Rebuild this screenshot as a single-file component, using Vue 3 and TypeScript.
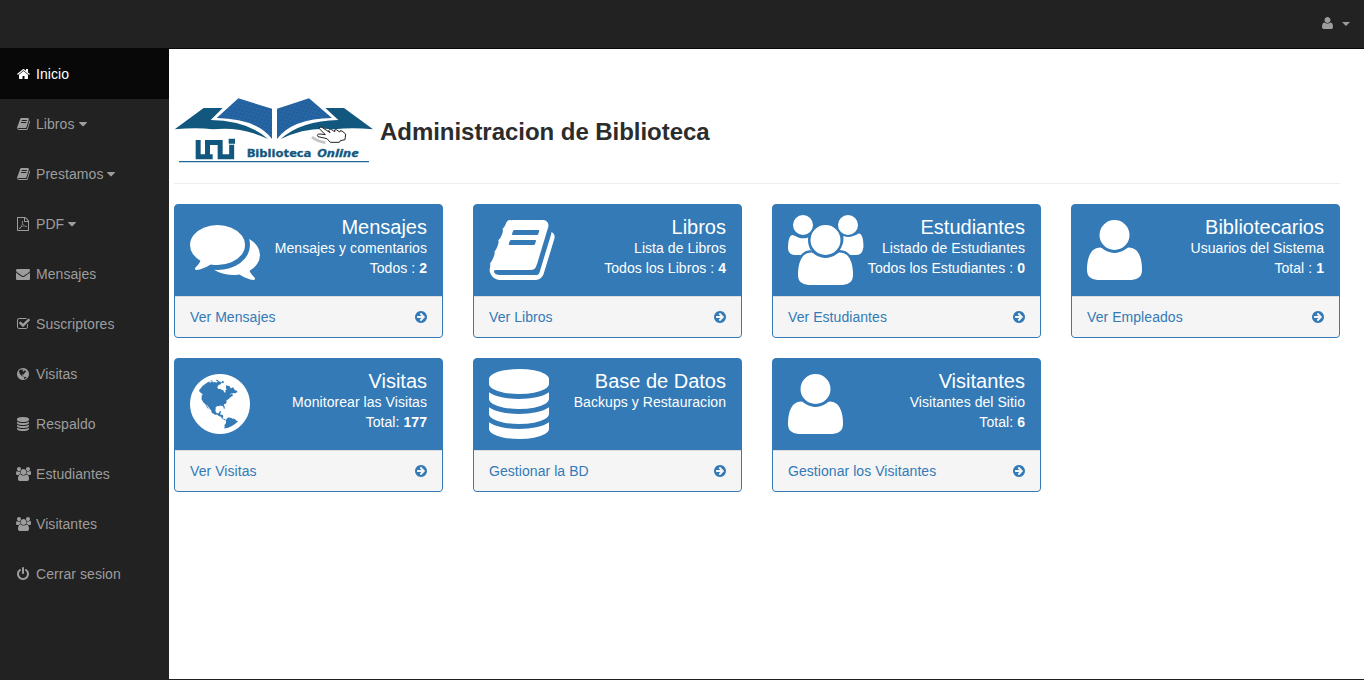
<script setup lang="ts">
interface Glyph { box: string; w: number; d: string }
interface NavItem { label: string; icon: string; active?: boolean; caret?: boolean }
interface Panel { title: string; text: string; total?: string; count?: string; link: string; icon: string }

const make = (x: number, w: number, d: string): Glyph => ({ box: `${x} 0 ${w} 1792`, w: w / 1792, d })

const glyphs: Record<string, Glyph> = {
  user: make(192, 1408, 'M1600 1405q0 120-73 189.5t-194 69.5h-874q-121 0-194-69.5t-73-189.5q0-53 3.5-103.5t14-109 26.5-108.5 43-97.5 62-81 85.5-53.5 111.5-20q9 0 42 21.5t74.5 48 108 48 133.5 21.5 133.5-21.5 108-48 74.5-48 42-21.5q61 0 111.5 20t85.5 53.5 62 81 43 97.5 26.5 108.5 14 109 3.5 103.5zm-320-893q0 159-112.5 271.5t-271.5 112.5-271.5-112.5-112.5-271.5 112.5-271.5 271.5-112.5 271.5 112.5 112.5 271.5z'),
  home: make(64, 1664, 'M1472 992v480q0 26-19 45t-45 19h-384v-384h-256v384h-384q-26 0-45-19t-19-45v-480q0-1 .5-3t.5-3l575-474 575 474q1 2 1 6zm223-69l-62 74q-8 9-21 11h-3q-13 0-21-7l-692-577-692 577q-12 8-24 7-13-2-21-11l-62-74q-8-10-7-23.5t11-21.5l719-599q32-26 76-26t76 26l244 204v-195q0-14 9-23t23-9h192q14 0 23 9t9 23v408l219 182q10 8 11 21.5t-7 23.5z'),
  book: make(48, 1664, 'M1703 478q40 57 18 129l-275 906q-19 64-76.5 107.5t-122.5 43.5h-923q-77 0-148.5-53.5t-99.5-131.5q-24-67-2-127 0-4 3-27t4-37q1-8-3-21.5t-3-19.5q2-11 8-21t16.5-23.5 16.5-23.5q23-38 45-91.5t30-91.5q3-10 .5-30t-.5-28q3-11 17-28t17-23q21-36 42-92t25-90q1-9-2.5-32t.5-28q4-13 22-30.5t22-22.5q19-26 42.5-84.5t27.5-96.5q1-8-3-25.5t-2-26.5q2-8 9-18t18-23 17-21q8-12 16.5-30.5t15-35 16-36 19.5-32 26.5-23.5 36-11.5 47.5 5.5l-1 3q38-9 51-9h761q74 0 114 56t18 130l-274 906q-36 119-71.5 153.5t-128.5 34.5h-869q-27 0-38 15-11 16-1 43 24 70 144 70h923q29 0 56-15.5t35-41.5l300-987q7-22 5-57 38 15 59 43zm-1064 2q-4 13 2 22.5t20 9.5h608q13 0 25.5-9.5t16.5-22.5l21-64q4-13-2-22.5t-20-9.5h-608q-13 0-25.5 9.5t-16.5 22.5zm-83 256q-4 13 2 22.5t20 9.5h608q13 0 25.5-9.5t16.5-22.5l21-64q4-13-2-22.5t-20-9.5h-608q-13 0-25.5 9.5t-16.5 22.5z'),
  pdf: make(128, 1536, 'M1596 380q28 28 48 76t20 88v1152q0 40-28 68t-68 28h-1344q-40 0-68-28t-28-68v-1600q0-40 28-68t68-28h896q40 0 88 20t76 48zm-444-244v376h376q-10-29-22-41l-313-313q-12-12-41-22zm384 1528v-1024h-416q-40 0-68-28t-28-68v-416h-768v1536h1280zm-514-593q33 26 84 56 59-7 117-7 147 0 177 49 16 22 2 52 0 1-1 2l-2 2v1q-6 38-71 38-48 0-115-20t-130-53q-221 24-392 83-153 262-242 262-15 0-28-7l-24-12q-1-1-6-5-10-10-6-36 9-40 56-91.5t132-96.5q14-9 23 6 2 2 2 4 52-85 107-197 68-136 104-262-24-82-30.5-159.5t6.5-127.5q11-40 42-40h22q23 0 35 15 18 21 9 68-2 6-4 8 1 3 1 8v30q-2 123-14 192 55 164 146 238zm-576 411q52-24 137-158-51 40-87.5 84t-49.5 74zm398-920q-15 42-2 132 1-7 7-44 0-3 7-43 1-4 4-8-1-1-1-2-1-2-1-3-1-22-13-36 0 1-1 2v2zm-124 661q135-54 284-81-2-1-13-9.5t-16-13.5q-76-67-127-176-27 86-83 197-30 56-45 83zm646-16q-24-24-140-24 76 28 124 28 14 0 18-1 0-1-2-3z'),
  envelope: make(0, 1792, 'M1792 710v794q0 66-47 113t-113 47h-1472q-66 0-113-47t-47-113v-794q44 49 101 87 362 246 497 345 57 42 92.5 65.5t94.5 48 110 24.5h2q51 0 110-24.5t94.5-48 92.5-65.5q170-123 498-345 57-39 100-87zm0-294q0 79-49 151t-122 123q-376 261-468 325-10 7-42.5 31t-54 38.5-52 32.5-57.5 27-50 9h-2q-23 0-50-9t-57.5-27-52-32.5-54-38.5-42.5-31q-91-64-262-182.5t-205-142.5q-62-42-117-115.5t-55-136.5q0-78 41.5-130t118.5-52h1472q65 0 112.5 47t47.5 113z'),
  check: make(64, 1664, 'M1472 930v318q0 119-84.5 203.5t-203.5 84.5h-832q-119 0-203.5-84.5t-84.5-203.5v-832q0-119 84.5-203.5t203.5-84.5h832q63 0 117 25 15 7 18 23 3 17-9 29l-49 49q-10 10-23 10-3 0-9-2-23-6-45-6h-832q-66 0-113 47t-47 113v832q0 66 47 113t113 47h832q66 0 113-47t47-113v-254q0-13 9-22l64-64q10-10 23-10 6 0 12 3 20 8 20 29zm231-489l-814 814q-24 24-57 24t-57-24l-430-430q-24-24-24-57t24-57l110-110q24-24 57-24t57 24l263 263 647-647q24-24 57-24t57 24l110 110q24 24 24 57t-24 57z'),
  globe: make(128, 1536, 'M896 128q209 0 385.5 103t279.5 279.5 103 385.5-103 385.5-279.5 279.5-385.5 103-385.5-103-279.5-279.5-103-385.5 103-385.5 279.5-279.5 385.5-103zm274 521q-2 1-9.5 9.5t-13.5 9.5q2 0 4.5-5t5-11 3.5-7q6-7 22-15 14-6 52-12 34-8 51 11-2-2 9.5-13t14.5-12q3-2 15-4.5t15-7.5l2-22q-12 1-17.5-7t-6.5-21q0 2-6 8 0-7-4.5-8t-11.5 1-9 1q-10-3-15-7.5t-8-16.5-4-15q-2-5-9.5-11t-9.5-10q-1-2-2.5-5.5t-3-6.5-4-5.5-5.5-2.5-7 5-7.5 10-4.5 5q-3-2-6-1.5t-4.5 1-4.5 3-5 3.5q-3 2-8.5 3t-8.5 2q15-5-1-11-10-4-16-3 9-4 7.5-12t-8.5-14h5q-1-4-8.5-8.5t-17.5-8.5-13-6q-8-5-34-9.5t-33-.5q-5 6-4.5 10.5t4 14 3.5 12.5q1 6-5.5 13t-6.5 12q0 7 14 15.5t10 21.5q-3 8-16 16t-16 12q-5 8-1.5 18.5t10.5 16.5q2 2 1.5 4t-3.5 4.5-5.5 4-6.5 3.5l-3 2q-11 5-20.5-6t-13.5-26q-7-25-16-30-23-8-29 1-5-13-41-26-25-9-58-4 6-1 0-15-7-15-19-12 3-6 4-17.5t1-13.5q3-13 12-23 1-1 7-8.5t9.5-13.5.5-6q35 4 50-11 5-5 11.5-17t10.5-17q9-6 14-5.5t14.5 5.5 14.5 5q14 1 15.5-11t-7.5-20q12 1 3-17-4-7-8-9-12-4-27 5-8 4 2 8-1-1-9.5 10.5t-16.5 17.5-16-5q-1-1-5.5-13.5t-9.5-13.5q-8 0-16 15 3-8-11-15t-24-8q19-12-8-27-7-4-20.5-5t-19.5 4q-5 7-5.5 11.5t5 8 10.5 5.5 11.5 4 8.5 3q14 10 8 14-2 1-8.5 3.5t-11.5 4.5-6 4q-3 4 0 14t-2 14q-5-5-9-17.5t-7-16.5q7 9-25 6l-10-1q-4 0-16 2t-20.5 1-13.5-8q-4-8 0-20 1-4 4-2-4-3-11-9.5t-10-8.5q-46 15-94 41 6 1 12-1 5-2 13-6.5t10-5.5q34-14 42-7l5-5q14 16 20 25-7-4-30-1-20 6-22 12 7 12 5 18-4-3-11.5-10t-14.5-11-15-5q-16 0-22 1-146 80-235 222 7 7 12 8 4 1 5 9t2.5 11 11.5-3q9 8 3 19 1-1 44 27 19 17 21 21 3 11-10 18-1-2-9-9t-9-4q-3 5 .5 18.5t10.5 12.5q-7 0-9.5 16t-2.5 35.5-1 23.5l2 1q-3 12 5.5 34.5t21.5 19.5q-13 3 20 43 6 8 8 9 3 2 12 7.5t15 10 10 10.5q4 5 10 22.5t14 23.5q-2 6 9.5 20t10.5 23q-1 0-2.5 1t-2.5 1q3 7 15.5 14t15.5 13q1 3 2 10t3 11 8 2q2-20-24-62-15-25-17-29-3-5-5.5-15.5t-4.5-14.5q2 0 6 1.5t8.5 3.5 7.5 4 2 3q-3 7 2 17.5t12 18.5 17 19 12 13q6 6 14 19.5t0 13.5q9 0 20 10t17 20q5 8 8 26t5 24q2 7 8.5 13.5t12.5 9.5l16 8 13 7q5 2 18.5 10.5t21.5 11.5q10 4 16 4t14.5-2.5 13.5-3.5q15-2 29 15t21 21q36 19 55 11-2 1 .5 7.5t8 15.5 9 14.5 5.5 8.5q5 6 18 15t18 15q6-4 7-9-3 8 7 20t18 10q14-3 14-32-31 15-49-18 0-1-2.5-5.5t-4-8.5-2.5-8.5 0-7.5 5-3q9 0 10-3.5t-2-12.5-4-13q-1-8-11-20t-12-15q-5 9-16 8t-16-9q0 1-1.5 5.5t-1.5 6.5q-13 0-15-1 1-3 2.5-17.5t3.5-22.5q1-4 5.5-12t7.5-14.5 4-12.5-4.5-9.5-17.5-2.5q-19 1-26 20-1 3-3 10.5t-5 11.5-9 7q-7 3-24 2t-24-5q-13-8-22.5-29t-9.5-37q0-10 2.5-26.5t3-25-5.5-24.5q3-2 9-9.5t10-10.5q2-1 4.5-1.5t4.5 0 4-1.5 3-6q-1-1-4-3-3-3-4-3 7 3 28.5-1.5t27.5 1.5q15 11 22-2 0-1-2.5-9.5t-.5-13.5q5 27 29 9 3 3 15.5 5t17.5 5q3 2 7 5.5t5.5 4.5 5-.5 8.5-6.5q10 14 12 24 11 40 19 44 7 3 11 2t4.5-9.5 0-14-1.5-12.5l-1-8v-18l-1-8q-15-3-18.5-12t1.5-18.5 15-18.5q1-1 8-3.5t15.5-6.5 12.5-8q21-19 15-35 7 0 11-9-1 0-5-3t-7.5-5-4.5-2q9-5 2-16 5-3 7.5-11t7.5-10q9 12 21 2 7-8 1-16 5-7 20.5-10.5t18.5-9.5q7 2 8-2t1-12 3-12q4-5 15-9t13-5l17-11q3-4 0-4 18 2 31-11 10-11-6-20 3-6-3-9.5t-15-5.5q3-1 11.5-.5t10.5-1.5q15-10-7-16-17-5-43 12zm-163 877q206-36 351-189-3-3-12.5-4.5t-12.5-3.5q-18-7-24-8 1-7-2.5-13t-8-9-12.5-8-11-7q-2-2-7-6t-7-5.5-7.5-4.5-8.5-2-10 1l-3 1q-3 1-5.5 2.5t-5.5 3-4 3 0 2.5q-21-17-36-22-5-1-11-5.5t-10.5-7-10-1.5-11.5 7q-5 5-6 15t-2 13q-7-5 0-17.5t2-18.5q-3-6-10.5-4.5t-12 4.5-11.5 8.5-9 6.5-8.5 5.5-8.5 7.5q-3 4-6 12t-5 11q-2-4-11.5-6.5t-9.5-5.5q2 10 4 35t5 38q7 31-12 48-27 25-29 40-4 22 12 26 0 7-8 20.5t-7 21.5q0 6 2 16z'),
  database: make(128, 1536, 'M896 768q237 0 443-43t325-127v170q0 69-103 128t-280 93.5-385 34.5-385-34.5-280-93.5-103-128v-170q119 84 325 127t443 43zm0 768q237 0 443-43t325-127v170q0 69-103 128t-280 93.5-385 34.5-385-34.5-280-93.5-103-128v-170q119 84 325 127t443 43zm0-384q237 0 443-43t325-127v170q0 69-103 128t-280 93.5-385 34.5-385-34.5-280-93.5-103-128v-170q119 84 325 127t443 43zm0-1152q208 0 385 34.5t280 93.5 103 128v128q0 69-103 128t-280 93.5-385 34.5-385-34.5-280-93.5-103-128v-128q0-69 103-128t280-93.5 385-34.5z'),
  users: make(64, 1920, 'M657 896q-162 5-265 128h-134q-82 0-138-40.5t-56-118.5q0-353 124-353 6 0 43.5 21t97.5 42.5 119 21.5q67 0 133-23-5 37-5 66 0 159 93 293zm1071 637q0 120-73 189.5t-194 69.5h-874q-121 0-194-69.5t-73-189.5q0-53 3.5-103.5t14-109 26.5-108.5 43-97.5 62-81 85.5-53.5 111.5-20q10 0 43 21.5t73 48 107 48 135 21.5 135-21.5 107-48 73-48 43-21.5q61 0 111.5 20t85.5 53.5 62 81 43 97.5 26.5 108.5 14 109 3.5 103.5zm-1024-1277q0 106-75 181t-181 75-181-75-75-181 75-181 181-75 181 75 75 181zm704 384q0 159-112.5 271.5t-271.5 112.5-271.5-112.5-112.5-271.5 112.5-271.5 271.5-112.5 271.5 112.5 112.5 271.5zm576 225q0 78-56 118.5t-138 40.5h-134q-103-123-265-128 93-134 93-293 0-29-5-66 66 23 133 23 59 0 119-21.5t97.5-42.5 43.5-21q124 0 124 353zm-128-609q0 106-75 181t-181 75-181-75-75-181 75-181 181-75 181 75 75 181z'),
  power: make(128, 1536, 'M1664 896q0 156-61 298t-164 245-245 164-298 61-298-61-245-164-164-245-61-298q0-182 80.5-343t226.5-270q43-32 95.5-25t83.5 50q32 42 24.5 94.5t-49.5 84.5q-98 74-151.5 181t-53.5 228q0 104 40.5 198.5t109.5 163.5 163.5 109.5 198.5 40.5 198.5-40.5 163.5-109.5 109.5-163.5 40.5-198.5q0-121-53.5-228t-151.5-181q-42-32-49.5-84.5t24.5-94.5q31-43 84-50t95 25q146 109 226.5 270t80.5 343zm-640-768v640q0 52-38 90t-90 38-90-38-38-90v-640q0-52 38-90t90-38 90 38 38 90z'),
  arrow: make(128, 1536, 'M1413 896q0-27-18-45l-91-91-362-362q-18-18-45-18t-45 18l-91 91q-18 18-18 45t18 45l189 189h-502q-26 0-45 19t-19 45v128q0 26 19 45t45 19h502l-189 189q-18 18-18 45t18 45l91 91q18 18 45 18t45-18l362-362 91-91q18-18 18-45zm251 0q0 209-103 385.5t-279.5 279.5-385.5 103-385.5-103-279.5-279.5-103-385.5 103-385.5 279.5-279.5 385.5-103 385.5 103 279.5 279.5 103 385.5z'),
  caret: make(384, 1024, 'M1408 704q0 26-19 45l-448 448q-19 19-45 19t-45-19l-448-448q-19-19-19-45t19-45 45-19h896q26 0 45 19t19 45z'),
  comments: make(0, 1792, 'M1408 768q0 139-94 257t-256.5 186.5-353.5 68.5q-86 0-176-16-124 88-278 128-36 9-86 16h-3q-11 0-20.5-8t-11.5-21q-1-3-1-6.5t.5-6.5 2-6l2.5-5 3.5-5.5 4-5 4.5-5 4-4.5q5-6 23-25t26-29.5 22.5-29 25-38.5 20.5-44q-124-72-195-177t-71-224q0-139 94-257t256.5-186.5 353.5-68.5 353.5 68.5 256.5 186.5 94 257zm384 256q0 120-71 224.5t-195 176.5q10 24 20.5 44t25 38.5 22.5 29 26 29.5 23 25q1 1 4 4.5t4.5 5 4 5 3.5 5.5l2.5 5 2 6 .5 6.5-1 6.5q-3 14-13 22t-22 7q-50-7-86-16-154-40-278-128-90 16-176 16-271 0-472-132 58 4 88 4 161 0 309-45t264-129q125-92 192-212t67-254q0-77-23-152 129 71 204 178t75 230z'),
}

const nav: NavItem[] = [
  { label: 'Inicio', icon: 'home', active: true },
  { label: 'Libros', icon: 'book', caret: true },
  { label: 'Prestamos', icon: 'book', caret: true },
  { label: 'PDF', icon: 'pdf', caret: true },
  { label: 'Mensajes', icon: 'envelope' },
  { label: 'Suscriptores', icon: 'check' },
  { label: 'Visitas', icon: 'globe' },
  { label: 'Respaldo', icon: 'database' },
  { label: 'Estudiantes', icon: 'users' },
  { label: 'Visitantes', icon: 'users' },
  { label: 'Cerrar sesion', icon: 'power' },
]

const panels: Panel[] = [
  { title: 'Mensajes', text: 'Mensajes y comentarios', total: 'Todos :', count: '2', link: 'Ver Mensajes', icon: 'comments' },
  { title: 'Libros', text: 'Lista de Libros', total: 'Todos los Libros :', count: '4', link: 'Ver Libros', icon: 'book' },
  { title: 'Estudiantes', text: 'Listado de Estudiantes', total: 'Todos los Estudiantes :', count: '0', link: 'Ver Estudiantes', icon: 'users' },
  { title: 'Bibliotecarios', text: 'Usuarios del Sistema', total: 'Total :', count: '1', link: 'Ver Empleados', icon: 'user' },
  { title: 'Visitas', text: 'Monitorear las Visitas', total: 'Total:', count: '177', link: 'Ver Visitas', icon: 'globe' },
  { title: 'Base de Datos', text: 'Backups y Restauracion', link: 'Gestionar la BD', icon: 'database' },
  { title: 'Visitantes', text: 'Visitantes del Sitio', total: 'Total:', count: '6', link: 'Gestionar los Visitantes', icon: 'user' },
]
</script>

<template>
  <div class="page">
    <header class="topbar">
      <a class="account">
        <svg class="glyph" :viewBox="glyphs.user.box" width="11" height="14"><path :d="glyphs.user.d" /></svg>
        <i class="caret"></i>
      </a>
    </header>
    <div class="body">
      <nav class="sidebar">
        <a v-for="item in nav" :key="item.label" class="nav-item" :class="{ active: item.active }">
          <span class="nav-icon">
            <svg class="glyph" :viewBox="glyphs[item.icon].box" :width="glyphs[item.icon].w * 14" height="14"><path :d="glyphs[item.icon].d" /></svg>
          </span>
          <span>{{ item.label }}</span>
          <svg v-if="item.caret" class="glyph" :viewBox="glyphs.caret.box" width="8" height="14"><path :d="glyphs.caret.d" /></svg>
        </a>
      </nav>
      <main class="content">
        <div class="page-header">
          <svg class="logo" viewBox="12 0 606 240" width="202" height="80">
            <defs>
              <pattern id="tiles" width="11" height="11" patternUnits="userSpaceOnUse" patternTransform="rotate(14) skewX(-14)">
                <rect width="11" height="11" fill="#21609f" />
                <path d="M0 0H11M0 0V11" stroke="#3d76ad" stroke-width="1.6" />
              </pattern>
            </defs>
            <path fill="#12577d" d="M14 118L101 54L158 54L122 90Q233 92 294 147Q212 108 128 118Q80 112 14 118Z" />
            <path fill="#12577d" d="M609 118L522 54L466 54L505 90Q394 92 332 147Q412 108 494 118Q545 112 609 118Z" />
            <path fill="url(#tiles)" d="M140 84L205 25L306 56V147Q260 86 140 84Z" />
            <path fill="url(#tiles)" d="M486 84L417 25L321 56V147Q366 86 486 84Z" />
            <path d="M426 141Q440 154 466 158" fill="none" stroke="#c4c4c4" stroke-width="8" />
            <path fill="#fff" stroke="#222" stroke-width="3" stroke-linejoin="round" d="M448 116Q446 108 456 112L480 128L476 121Q480 115 490 122L494 126Q492 117 499 119L509 126Q508 120 516 123L527 132L525 149L511 152L508 157H481L471 146L444 140Q438 132 450 132L466 134Z" />
            <path fill="none" stroke="#12577d" stroke-width="15" d="M84.500 150V200.500H112.500V157.500H150.500V200.500H185V164M92 200.500H128M176 154H195" />
            <text x="230" y="200" textLength="194" lengthAdjust="spacingAndGlyphs" class="logo-text">Biblioteca</text>
            <text x="441" y="200" textLength="125" lengthAdjust="spacingAndGlyphs" class="logo-text slanted">Online</text>
            <path d="M27 215H597" stroke="#1d6796" stroke-width="3.500" />
          </svg>
          <h1>Administracion de Biblioteca</h1>
        </div>
        <div class="panels">
          <section v-for="p in panels" :key="p.title" class="panel">
            <div class="panel-heading">
              <svg class="glyph" :viewBox="glyphs[p.icon].box" :width="glyphs[p.icon].w * 70" height="70"><path :d="glyphs[p.icon].d" /></svg>
              <div class="panel-text">
                <div class="panel-title">{{ p.title }}</div>
                <div>{{ p.text }}</div>
                <div v-if="p.count">{{ p.total }} <b>{{ p.count }}</b></div>
              </div>
            </div>
            <a class="panel-footer">
              <span>{{ p.link }}</span>
              <svg class="glyph" :viewBox="glyphs.arrow.box" width="12" height="14"><path :d="glyphs.arrow.d" /></svg>
            </a>
          </section>
        </div>
      </main>
    </div>
    <div class="bottom-edge"></div>
  </div>
</template>

<style>
body { background: #fff; overflow: hidden; }
</style>

<style scoped>
.page {
  display: flex;
  flex-direction: column;
  height: 680px;
  font: 14px/20px "Liberation Sans", Arial, sans-serif;
  letter-spacing: 0.06px;
  color: #333;
}
.glyph { display: block; flex: none; fill: currentColor; overflow: visible; }
.topbar {
  box-sizing: border-box;
  height: 49px;
  background: #222;
  border-bottom: 1px solid #080808;
  display: flex;
  justify-content: flex-end;
}
.account {
  display: flex;
  align-items: center;
  gap: 9px;
  height: 46px;
  padding-right: 14px;
  color: #9d9d9d;
}
.caret { margin-top: 2px; border-top: 4px solid; border-left: 4px solid transparent; border-right: 4px solid transparent; }
.body { flex: 1; display: flex; min-height: 0; }
.sidebar { width: 169px; background: #222; }
.nav-item {
  display: flex;
  align-items: center;
  gap: 4px;
  height: 50px;
  padding-left: 14px;
  color: #9d9d9d;
}
.nav-item.active { background: #080808; color: #fff; }
.nav-icon { display: flex; justify-content: center; width: 18px; }
.content { flex: 1; padding: 41px 24px 0 5px; }
.page-header {
  display: flex;
  height: 93px;
  border-bottom: 1px solid #eee;
  margin-bottom: 20px;
}
.logo { display: block; flex: none; }
.logo-text { font: bold 31px "Open Sans", sans-serif; fill: #12577d; stroke: #12577d; stroke-width: 1; }
.slanted { font-style: italic; }
h1 { margin: 29px 0 0 4px; font-size: 24px; line-height: 26px; font-weight: bold; letter-spacing: -0.04px; color: #2c2c2c; white-space: nowrap; }
.panels { display: grid; grid-template-columns: repeat(4, 269px); gap: 20px 30px; }
.panel {
  border: 1px solid #337ab7;
  border-radius: 4px;
  overflow: hidden;
  background: #337ab7;
}
.panel-heading {
  box-sizing: border-box;
  display: flex;
  justify-content: space-between;
  height: 91px;
  padding: 10px 15px;
  color: #fff;
}
.panel-text { text-align: right; white-space: nowrap; }
.panel-title { padding-top: 1px; font-size: 20px; line-height: 22px; letter-spacing: 0; }
.panel-footer {
  display: flex;
  justify-content: space-between;
  align-items: center;
  padding: 10px 15px;
  border-top: 1px solid #ddd;
  background: #f5f5f5;
  color: #337ab7;
}
.bottom-edge { height: 1px; background: #231f20; }
</style>
